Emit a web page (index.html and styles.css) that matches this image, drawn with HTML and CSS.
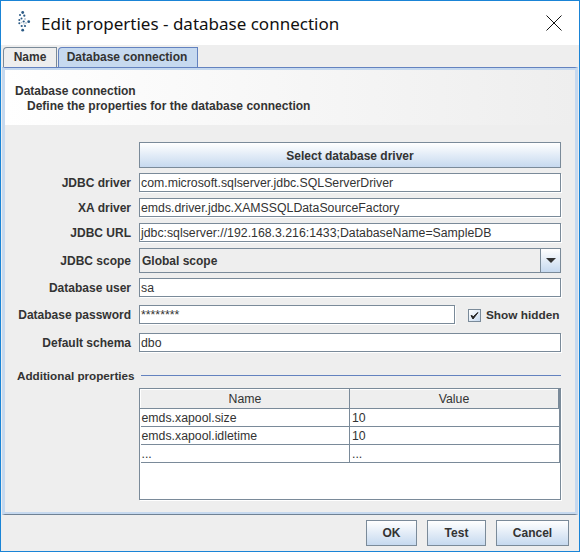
FILE: index.html
```html
<!DOCTYPE html>
<html lang="en">
<head>
    <meta charset="UTF-8">
    <meta name="viewport" content="width=device-width, initial-scale=1.0">
    <title>Edit properties - database connection</title>
    <link rel="stylesheet" href="styles.css">
</head>
<body>
<div class="window">
    <header class="titlebar">
        <svg class="app-icon" width="14" height="22" viewBox="0 0 14 22">
            <g fill="#b9c6d2">
                <circle cx="8" cy="8" r="1"/>
                <circle cx="9" cy="12" r="1"/>
                <circle cx="7" cy="13" r="0.8"/>
                <circle cx="4.5" cy="11.5" r="0.8"/>
            </g>
            <g fill="#2b5a85">
                <circle cx="5.7" cy="1.5" r="1.4"/>
                <circle cx="3" cy="4" r="1"/>
                <circle cx="7.3" cy="4.7" r="1.1"/>
                <circle cx="4.5" cy="7.5" r="1"/>
                <circle cx="2.3" cy="9" r="1"/>
                <circle cx="6.7" cy="10.5" r="1.1"/>
                <circle cx="11.7" cy="10.7" r="1.4"/>
                <circle cx="2.3" cy="12.3" r="1"/>
                <circle cx="4.7" cy="15" r="1.1"/>
                <circle cx="8" cy="15" r="1.1"/>
                <circle cx="5.7" cy="19.2" r="1.4"/>
            </g>
        </svg>
        <h1 class="title">Edit properties - database connection</h1>
        <svg class="close-icon" width="16" height="16" viewBox="0 0 16 16">
            <path d="M0.5 0.5 L15.5 15.5 M15.5 0.5 L0.5 15.5" stroke="#111" stroke-width="1" fill="none"/>
        </svg>
    </header>

    <nav class="tabs">
        <div class="tab">Name</div>
        <div class="tab tab-active">Database connection</div>
    </nav>

    <main class="panel">
        <div class="panel-head">
            <div>Database connection</div>
            <div class="panel-sub">Define the properties for the database connection</div>
        </div>

        <div class="form">
            <div class="row">
                <span class="label"></span>
                <button class="btn btn-wide">Select database driver</button>
            </div>
            <div class="row row-first">
                <label class="label">JDBC driver</label>
                <div class="input">com.microsoft.sqlserver.jdbc.SQLServerDriver</div>
            </div>
            <div class="row">
                <label class="label">XA driver</label>
                <div class="input">emds.driver.jdbc.XAMSSQLDataSourceFactory</div>
            </div>
            <div class="row">
                <label class="label">JDBC URL</label>
                <div class="input">jdbc:sqlserver://192.168.3.216:1433;DatabaseName=SampleDB</div>
            </div>
            <div class="row">
                <label class="label">JDBC scope</label>
                <div class="combo">
                    <div class="combo-value">Global scope</div>
                    <div class="combo-arrow"><span class="arrow"></span></div>
                </div>
            </div>
            <div class="row row-first">
                <label class="label">Database user</label>
                <div class="input">sa</div>
            </div>
            <div class="row row-pass">
                <label class="label">Database password</label>
                <div class="input input-pass">********</div>
                <div class="check">
                    <span class="checkbox">
                        <svg width="11" height="11" viewBox="0 0 11 11"><path d="M2 5.5 L4 9 L9 2.5 L4.5 6.5 Z" fill="#222" stroke="#222"/></svg>
                    </span>
                    <span>Show hidden</span>
                </div>
            </div>
            <div class="row row-schema">
                <label class="label">Default schema</label>
                <div class="input">dbo</div>
            </div>

            <div class="legend">
                <span>Additional properties</span>
                <span class="legend-line"></span>
            </div>

            <div class="table-box">
                <table class="props">
                    <thead>
                        <tr><th>Name</th><th>Value</th></tr>
                    </thead>
                    <tbody>
                        <tr><td>emds.xapool.size</td><td>10</td></tr>
                        <tr><td>emds.xapool.idletime</td><td>10</td></tr>
                        <tr><td>...</td><td>...</td></tr>
                    </tbody>
                </table>
            </div>
        </div>
    </main>

    <footer class="footer">
        <button class="btn btn-ok">OK</button>
        <button class="btn btn-test">Test</button>
        <button class="btn btn-cancel">Cancel</button>
    </footer>
</div>
</body>
</html>
```

FILE: styles.css
```css
html, body {
    margin: 0;
    padding: 0;
}
body {
    width: 580px;
    height: 552px;
    overflow: hidden;
    font-family: "Liberation Sans", Arial, sans-serif;
    font-size: 12px;
    color: #333;
}
.window {
    box-sizing: border-box;
    width: 580px;
    height: 552px;
    border: 1px solid #1a84d6;
    background-color: #eeeeee;
    display: flex;
    flex-direction: column;
}

/* title bar */
.titlebar {
    height: 44px;
    flex: none;
    background-color: #fff;
    display: flex;
    align-items: center;
    padding: 0 17px 0 16px;
}
.app-icon {
    flex: none;
    margin-top: -2px;
}
.title {
    margin: 0 0 0 10px;
    font-family: "Noto Sans", "Open Sans", sans-serif;
    font-size: 17px;
    font-weight: 400;
    color: #111;
    flex: 1;
}
.close-icon {
    flex: none;
}

/* tabs */
.tabs {
    height: 22px;
    flex: none;
    display: flex;
    align-items: flex-end;
    padding-left: 2px;
    gap: 1px;
}
.tab {
    box-sizing: border-box;
    height: 20px;
    width: 54px;
    border: 1px solid #7a8a99;
    border-bottom: none;
    border-top-left-radius: 4px;
    text-align: center;
    line-height: 19px;
    font-weight: bold;
    background-color: #eeeeee;
}
.tab-active {
    width: 140px;
    padding-right: 2px;
    background-color: #c6d9ef;
    border-color: #6382bf;
}

/* content panel */
.panel {
    flex: none;
    box-sizing: border-box;
    height: 448px;
    border-top: 1px solid #6382bf;
    border-bottom: 1px solid #6f8193;
    border-left: 3px solid #c6d9ef;
    border-right: 3px solid #c6d9ef;
    margin: 0 1px;
    padding: 2px 0;
    background-color: #c6d9ef;
    display: flex;
    flex-direction: column;
}
.panel-head {
    height: 55px;
    box-sizing: border-box;
    padding-top: 14px;
    padding-left: 10px;
    background: linear-gradient(to right, #ffffff, #eeeeee);
    font-weight: bold;
    line-height: 15px;
}
.panel-sub {
    padding-left: 12px;
}

/* form rows */
.form {
    padding: 17px 14px 0 0;
    background-color: #eeeeee;
    flex: 1;
}
.row {
    display: flex;
    align-items: center;
    margin-bottom: 6px;
}
.row-first {
    margin-top: -1px;
}
.row-pass {
    margin-top: 8px;
    margin-bottom: 9px;
}
.row-schema {
    margin-bottom: 0;
}
.label {
    width: 126px;
    margin-right: 8px;
    flex: none;
    text-align: right;
    font-weight: bold;
}
.input {
    box-sizing: border-box;
    flex: 1;
    height: 19px;
    background-color: #fff;
    border: 1px solid #7a8a99;
    padding-left: 1px;
    line-height: 19px;
    font-size: 12.3px;
    color: #333;
    white-space: nowrap;
    overflow: hidden;
    box-shadow: 1px 1px 0 #fff;
}
.input-pass {
    flex: none;
    width: 316px;
}
.btn {
    box-sizing: border-box;
    height: 26px;
    border: 1px solid #7a8a99;
    background: linear-gradient(to bottom, #ffffff, #c6d9ef);
    font-family: "Liberation Sans", Arial, sans-serif;
    font-size: 12px;
    font-weight: bold;
    color: #333;
    padding: 0;
}
.btn-wide {
    flex: 1;
    padding-top: 1px;
}

/* combo box */
.combo {
    box-sizing: border-box;
    flex: 1;
    height: 25px;
    display: flex;
    border: 1px solid #7a8a99;
    background-color: #eeeeee;
}
.combo-value {
    flex: 1;
    font-weight: bold;
    padding-left: 2px;
    line-height: 24px;
}
.combo-arrow {
    width: 19px;
    border-left: 1px solid #7a8a99;
    background: linear-gradient(to bottom, #ffffff, #c6d9ef);
    display: flex;
    align-items: center;
    justify-content: center;
}
.arrow {
    width: 0;
    height: 0;
    border-left: 5px solid transparent;
    border-right: 5px solid transparent;
    border-top: 5px solid #333;
}

/* checkbox */
.check {
    display: flex;
    align-items: center;
    margin: 1px 0 0 13px;
    font-size: 11.8px;
    font-weight: bold;
    white-space: nowrap;
}
.checkbox {
    box-sizing: border-box;
    width: 13px;
    height: 13px;
    border: 1px solid #7a8a99;
    background: linear-gradient(to bottom right, #ffffff, #c6d9ef);
    margin-right: 5px;
    display: flex;
    align-items: center;
    justify-content: center;
}

/* additional properties */
.legend {
    display: flex;
    align-items: center;
    margin: 15px 0 5px 12px;
    font-size: 11.7px;
    font-weight: bold;
    height: 16px;
}
.legend-line {
    flex: 1;
    height: 1px;
    background-color: #6382bf;
    margin-left: 6px;
}
.table-box {
    box-sizing: border-box;
    margin-left: 134px;
    height: 112px;
    background-color: #fff;
    border: 1px solid #7a8a99;
    box-shadow: 1px 1px 0 #fff;
}
.props {
    width: 420px;
    border-collapse: collapse;
    table-layout: fixed;
    font-size: 12.3px;
    color: #333;
}
.props th {
    height: 18px;
    padding: 0;
    font-weight: normal;
    background-color: #eeeeee;
    border-right: 1px solid #7a8a99;
    border-bottom: 1px solid #7a8a99;
    border-left: 1px solid #fff;
    border-top: 1px solid #fff;
}
.props th:first-child {
    width: 208px;
}
.props th:last-child {
    border-right-width: 2px;
}
.props td {
    height: 17px;
    padding: 0 0 0 2px;
    border-right: 1px solid #7a8a99;
    border-bottom: 1px solid #7a8a99;
}
.props td:first-child {
    padding-left: 1px;
}

/* bottom buttons */
.footer {
    flex: 1;
    display: flex;
    justify-content: flex-end;
    align-items: flex-start;
    padding: 5px 10px 0 0;
    gap: 10px;
}
.btn-ok {
    width: 51px;
}
.btn-test {
    width: 59px;
}
.btn-cancel {
    width: 73px;
}
```
